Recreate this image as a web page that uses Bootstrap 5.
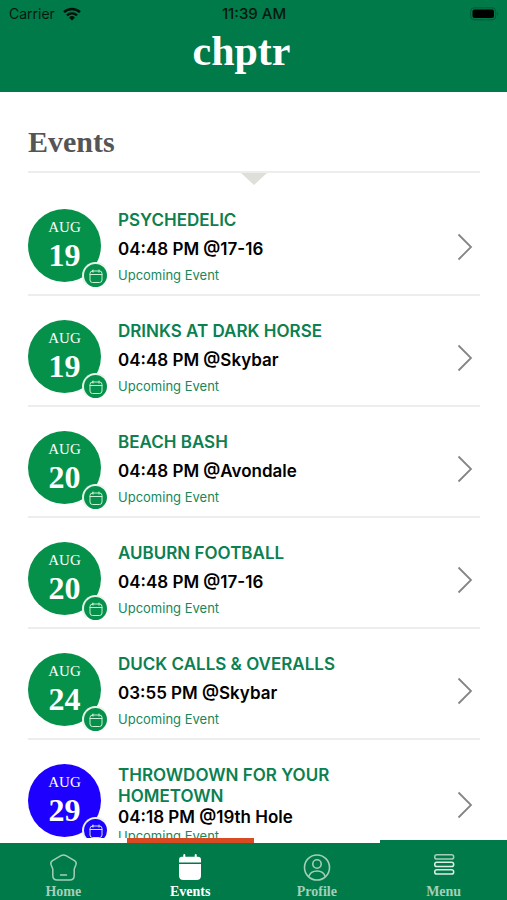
<!DOCTYPE html>
<html lang="en">
<head>
<meta charset="utf-8">
<meta name="viewport" content="width=device-width, initial-scale=1">
<title>chptr Events</title>
<link rel="stylesheet" href="https://cdn.jsdelivr.net/npm/bootstrap@5.3.0/dist/css/bootstrap.min.css">
<style>
  :root { --brand: #007a49; --event: #05914a; --rule: #ededed; }
  body { font-family: Inter, "Liberation Sans", sans-serif; color: #000; }
  .serif { font-family: "Liberation Serif", serif; }
  .brand-bg { background: var(--brand); }
  .status-bar { height: 28px; padding: 0 8px 0 9px; font-size: 14px; line-height: 28px; color: #06180f; }
  .status-bar > * { flex: 1 1 0; }
  .status-time { font-size: 15px; font-weight: 500; }
  .logo { font-size: 42px; line-height: 46px; padding: 0 24px 18px 0; }
  .logo a { color: #fff; }
  .scroller { min-height: 0; scrollbar-width: none; padding: 32px 27px 0 28px; }
  .page-title { font-size: 30px; line-height: 36px; padding-bottom: 11px; border-bottom: 2px solid var(--rule); color: #555; }
  .pointer { height: 12px; line-height: 0; }
  .event { padding: 24px 7px 10px 0; border-bottom: 2px solid var(--rule); color: #000; }
  .event-date { width: 73px; height: 73px; background: var(--event); color: #fff; }
  .event-date.special, .special .event-kind { background: #1e00ff; }
  .event-month { font-size: 15px; line-height: 20px; padding-top: 8px; }
  .event-day { font-size: 32px; line-height: 36px; }
  .event-kind { width: 27px; height: 27px; right: -8px; bottom: -7px; background: var(--event); border: 2px solid #e6f5ec; border-right-color: #fff; border-bottom-color: #fff; }
  .event-text { min-height: 75px; margin-left: 17px; padding: 1px 90px 0 0; }
  .event-name { font-size: 17px; line-height: 21px; color: #0b8050; }
  .event-time { font-size: 17px; line-height: 20px; }
  .event-state { font-size: 13px; line-height: 18px; color: #18875a; }
  .strip { height: 5px; }
  .strip-orange { background: #d84a22; }
  .strip-green { height: 3px; background: var(--brand); }
  .tab { padding: 9px 0 0; height: 57px; color: #a3cfb9; font-size: 14px; line-height: 16px; }
  .tab.active { color: #fff; }
  .tab svg { margin-bottom: 1px; }
</style>
<script src="https://cdn.jsdelivr.net/npm/bootstrap@5.3.0/dist/js/bootstrap.bundle.min.js"></script>
</head>
<body class="bg-white">
<svg class="d-none" aria-hidden="true">
  <symbol id="calendar" viewBox="0 0 16 16"><g fill="none" stroke="#c9f0d8" stroke-linecap="round"><rect x="2" y="3" width="12" height="11.500" rx="2.500"/><path d="M2 6.500h12M5 2v2.200M11 2v2.200"/></g></symbol>
  <symbol id="chevron" viewBox="0 0 16 28"><path d="M1.500 1.500 14 14 1.500 26.500" fill="none" stroke="#858585" stroke-width="1.800"/></symbol>
</svg>
<div class="d-flex flex-column vh-100">
  <header class="brand-bg">
    <div class="status-bar d-flex align-items-center">
      <div class="d-flex align-items-center gap-2">Carrier
        <svg width="18" height="14" viewBox="0 0 18 14" aria-label="Wi-Fi"><g fill="none" stroke="#04110b" stroke-width="2.400"><path d="M1 5.200a11.500 11.500 0 0 1 16 0"/><path d="M4 8.400a7.200 7.200 0 0 1 10 0"/></g><path d="M6 10.400a4.300 4.300 0 0 1 6 0l-3 3.200z" fill="#04110b"/></svg>
      </div>
      <div class="status-time text-center">11:39 AM</div>
      <div class="d-flex justify-content-end">
        <svg width="29" height="14" viewBox="0 0 29 14" aria-label="Battery"><rect x=".7" y=".8" width="25" height="12" rx="3.500" fill="none" stroke="#035735"/><rect x="2.500" y="2.600" width="21.500" height="8.500" rx="2" fill="#000"/><path d="M27.200 4.800q2 2 0 4z" fill="#035735"/></svg>
      </div>
    </div>
    <div class="logo serif fw-bold text-center"><a href="#" class="text-decoration-none">chptr</a></div>
  </header>

  <main class="scroller flex-grow-1 overflow-auto">
    <h1 class="page-title serif fw-bold m-0">Events</h1>
    <div class="pointer text-center"><svg width="26" height="12" viewBox="0 0 26 12" aria-hidden="true"><path d="M0 0h26L13 12z" fill="#dfdfda"/></svg></div>
    <div id="events"></div>
  </main>

  <div class="strip row g-0 row-cols-4 align-items-end flex-shrink-0">
    <div></div><div class="strip-orange h-100"></div><div></div><div class="strip-green"></div>
  </div>
  <nav class="brand-bg row g-0 row-cols-4 flex-shrink-0 serif fw-bold text-center" aria-label="Main">
    <a href="#" class="tab d-flex flex-column align-items-center text-decoration-none">
      <svg width="30" height="31" viewBox="0 0 30 31" fill="none" stroke="currentColor" stroke-width="1.500" stroke-linejoin="round" stroke-linecap="round" aria-hidden="true"><path d="M13 3.600Q15.500 2.400 18 3.600L26.500 8.700Q28.700 10.200 28 12.500L26.200 17V23.500Q26.200 28 21.700 28H9.300Q4.800 28 4.800 23.500V17L3 12.500Q2.300 10.200 4.500 8.700Z"/><path d="M12.500 23h6"/></svg>
      Home</a>
    <a href="#" class="tab active d-flex flex-column align-items-center text-decoration-none" aria-current="page">
      <svg width="30" height="31" viewBox="0 0 30 31" fill="currentColor" aria-hidden="true"><path d="M4 10.500V8Q4 4.800 7 4.800H8.300V3a1 1 0 0 1 2 0V4.800h9.400V3a1 1 0 0 1 2 0V4.800h1.300q3 0 3 3.200v2.500z"/><path d="M4 12h22V23.500q0 4.500-4.500 4.500H8.500q-4.500 0-4.500-4.500z"/></svg>
      Events</a>
    <a href="#" class="tab d-flex flex-column align-items-center text-decoration-none">
      <svg width="30" height="31" viewBox="0 0 30 31" fill="none" stroke="currentColor" stroke-width="1.600" aria-hidden="true"><circle cx="15" cy="15.500" r="12.500"/><circle cx="15" cy="12" r="4.200"/><path d="M6.800 24.500Q8.500 19 15 19T23.200 24.500"/></svg>
      Profile</a>
    <a href="#" class="tab d-flex flex-column align-items-center text-decoration-none">
      <svg width="30" height="31" viewBox="0 0 30 31" fill="none" stroke="currentColor" stroke-width="1.500" aria-hidden="true"><rect x="5.700" y="2.700" width="19" height="4.400" rx="2.200"/><g stroke="#dcefe5"><rect x="5.700" y="10.200" width="19" height="4.400" rx="2.200"/><rect x="5.700" y="17.700" width="19" height="4.400" rx="2.200"/></g></svg>
      Menu</a>
  </nav>
</div>
<script>
  const events = [
    ["19", "PSYCHEDELIC", "04:48 PM @17-16"],
    ["19", "DRINKS AT DARK HORSE", "04:48 PM @Skybar"],
    ["20", "BEACH BASH", "04:48 PM @Avondale"],
    ["20", "AUBURN FOOTBALL", "04:48 PM @17-16"],
    ["24", "DUCK CALLS & OVERALLS", "03:55 PM @Skybar"],
    ["29", "THROWDOWN FOR YOUR HOMETOWN", "04:18 PM @19th Hole", "special"]
  ];
  document.getElementById("events").innerHTML = events.map(([day, name, time, kind = ""]) => `
    <a href="#" class="event d-flex align-items-center text-decoration-none">
      <div class="event-date ${kind} serif rounded-circle text-center position-relative flex-shrink-0 align-self-start">
        <div class="event-month">AUG</div>
        <div class="event-day fw-bold">${day}</div>
        <div class="event-kind rounded-circle position-absolute d-flex align-items-center justify-content-center">
          <svg width="16" height="16" aria-hidden="true"><use href="#calendar"/></svg>
        </div>
      </div>
      <div class="event-text flex-grow-1 d-flex flex-column justify-content-between">
        <div class="event-name fw-semibold">${name.replace("&", "&amp;")}</div>
        <div class="event-time fw-semibold">${time}</div>
        <div class="event-state">Upcoming Event</div>
      </div>
      <svg class="flex-shrink-0" width="16" height="28" aria-hidden="true"><use href="#chevron"/></svg>
    </a>`).join("");
</script>
</body>
</html>
